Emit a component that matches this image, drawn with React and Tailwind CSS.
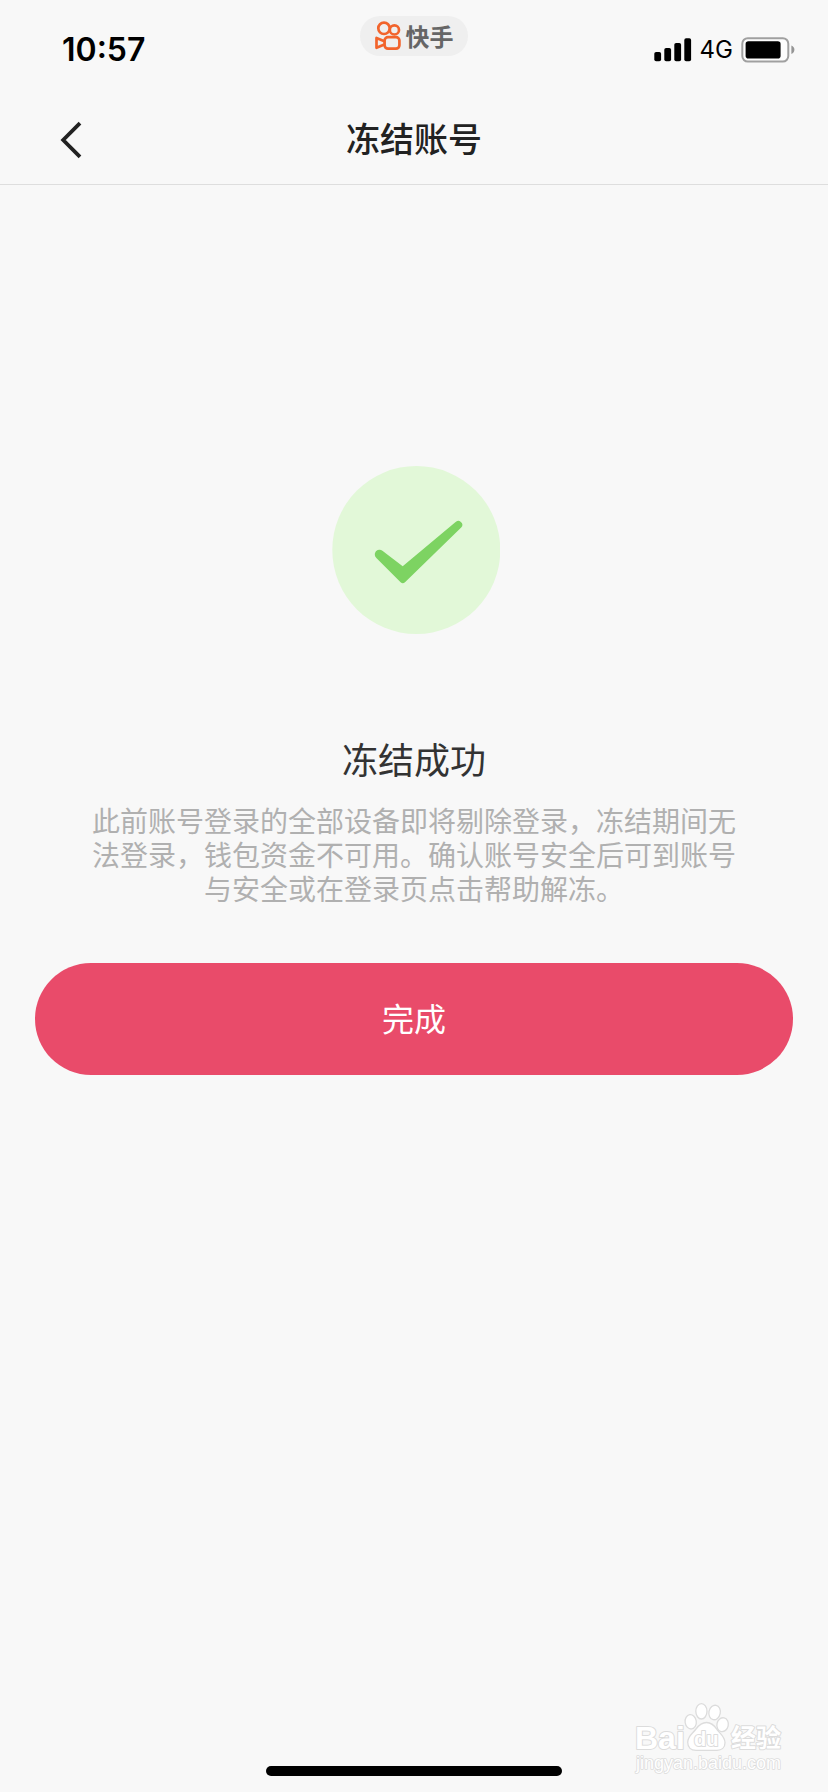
import React from "react";

function KuaishouLogo() {
  return (
    <svg className="h-[30px] w-[26px]" viewBox="0 0 26 30" fill="none" stroke="#f2642c" strokeWidth="2.7" strokeLinejoin="round" aria-hidden="true">
      <circle cx="9" cy="7.3" r="5.7" />
      <circle cx="19.4" cy="8.9" r="4.6" />
      <rect x="9.6" y="16.1" width="14.8" height="11.6" rx="3.4" />
      <path d="M9.4 20.2 1.5 17v9.8l7.9-3.3" />
    </svg>
  );
}

function SignalIcon() {
  return (
    <svg className="h-[24px] w-[38px]" viewBox="0 0 38 24" fill="#000" role="img" aria-label="信号">
      <rect x="0.3" y="14" width="6.8" height="9.2" rx="1.8" />
      <rect x="10.3" y="10" width="6.8" height="13.2" rx="1.8" />
      <rect x="20.3" y="5" width="6.8" height="18.2" rx="1.8" />
      <rect x="30.3" y="0.2" width="6.8" height="23" rx="1.8" />
    </svg>
  );
}

function BatteryIcon() {
  return (
    <svg className="h-[26px] w-[54px]" viewBox="0 0 54 26" role="img" aria-label="电池">
      <rect x="1.3" y="1.2" width="46" height="23.4" rx="5.5" fill="#fdfdfd" stroke="#a0a0a0" strokeWidth="2" />
      <rect x="4.6" y="4.300" width="35" height="17.200" rx="2.8" fill="#000" />
      <path d="M50.4 8.6c1.900.8 3 2.300 3 4.200s-1.100 3.400-3 4.200z" fill="#959595" />
    </svg>
  );
}

function StatusBar() {
  return (
    <div className="grid h-24 grid-cols-3 items-start pr-[33px] pl-[34px] text-black">
      <time className="pt-[34px] pl-7 font-['Inter',sans-serif] text-[32px] leading-8 font-semibold">10:57</time>
      <div className="mt-4 flex h-10 w-[108px] items-center justify-center gap-1 justify-self-center rounded-full bg-[#efefef] text-2xl leading-8 font-bold text-[#666]">
        <KuaishouLogo />
        <span>快手</span>
      </div>
      <div className="flex items-center justify-end gap-2 pt-9">
        <SignalIcon />
        <span className="font-['Inter',sans-serif] text-2xl leading-7">4G</span>
        <BatteryIcon />
      </div>
    </div>
  );
}

function Header() {
  return (
    <header className="grid h-[89px] grid-cols-[96px_1fr_96px] items-center border-b border-[#dedede]">
      <button type="button" aria-label="返回" className="flex h-full items-center pl-[60px]">
        <svg className="h-[38px] w-[22px]" viewBox="0 0 22 38" fill="none" stroke="#222" strokeWidth="3.8" aria-hidden="true">
          <path d="M20 2.200 3.200 19 20 35.800" />
        </svg>
      </button>
      <h1 className="pb-1 text-center text-[34px] leading-10 font-medium text-[#222]">冻结账号</h1>
    </header>
  );
}

function SuccessMark() {
  return (
    <svg className="h-[168px] w-[172px]" viewBox="0 0 172 168" role="img" aria-label="成功">
      <circle cx="88.300" cy="84" r="84" fill="#e2f8d8" />
      <path
        d="M54.400 84.700 74.700 100.200 127.300 56.200A3.900 3.900 0 0 1 133.200 61.500L77 116.200Q74.800 118.200 72.600 116.200L48.600 92.200A4.700 4.700 0 0 1 54.400 84.700Z"
        fill="#7dd362"
      />
    </svg>
  );
}

function Watermark() {
  return (
    <svg
      className="absolute right-10 bottom-3 h-[80px] w-[156px]"
      viewBox="0 0 156 80"
      fill="#fff"
      stroke="#dcdcdc"
      strokeWidth="2"
      strokeLinejoin="round"
      role="img"
      aria-label="Baidu 经验"
    >
      <g strokeWidth="1.300">
        <ellipse cx="58.700" cy="21.800" rx="5.600" ry="7.200" transform="rotate(-8 58.700 21.800)" />
        <ellipse cx="69.400" cy="11.300" rx="5.600" ry="7.700" />
        <ellipse cx="82.600" cy="12.500" rx="5.700" ry="7.300" transform="rotate(12 82.600 12.500)" />
        <ellipse cx="90.600" cy="24.700" rx="5.700" ry="7" transform="rotate(12 90.600 24.700)" />
        <path d="M74.500 22.500c5 0 8 3.200 10.500 7 3.200 4.500 8 7 8 13.200 0 5-3.500 7.600-8 7.600H64c-5 0-8.300-3-8.300-8 0-6.300 4.800-8.600 8.300-13.300 2.600-3.500 5.700-6.500 10.500-6.500Z" />
      </g>
      <g className="[paint-order:stroke]">
        <text x="3" y="49" className="font-['Liberation_Sans',sans-serif] text-[32px] font-bold">Bai</text>
        <text x="62" y="46" className="font-['Liberation_Sans',sans-serif] text-[20px] font-bold">du</text>
        <text x="99" y="47" className="font-['Noto_Sans_CJK_SC',sans-serif] text-[25px] font-bold">经验</text>
        <text x="4" y="69" className="font-['Liberation_Sans',sans-serif] text-[18px]" strokeWidth="1.600">jingyan.baidu.com</text>
      </g>
    </svg>
  );
}

export default function App() {
  return (
    <div className="relative flex min-h-screen flex-col bg-[#f8f8f8] font-['Noto_Sans_CJK_SC',sans-serif]">
      <StatusBar />
      <Header />
      <main className="flex flex-1 flex-col items-center px-[35px] pt-[281px]">
        <SuccessMark />
        <h2 className="mt-[100px] text-4xl leading-[48px] text-[#333]">冻结成功</h2>
        <p className="mt-[21px] max-w-[644px] text-center text-[28px] leading-[34px] text-[#b0b0b0]">
          此前账号登录的全部设备即将剔除登录，冻结期间无法登录，钱包资金不可用。确认账号安全后可到账号与安全或在登录页点击帮助解冻。
        </p>
        <button type="button" className="mt-[58px] h-28 w-full rounded-full bg-[#e94b6a] pb-1 text-[32px] leading-10 text-white">
          完成
        </button>
      </main>
      <footer className="flex justify-center pb-4">
        <div className="h-[10px] w-[296px] rounded-full bg-black" />
      </footer>
      <Watermark />
    </div>
  );
}
